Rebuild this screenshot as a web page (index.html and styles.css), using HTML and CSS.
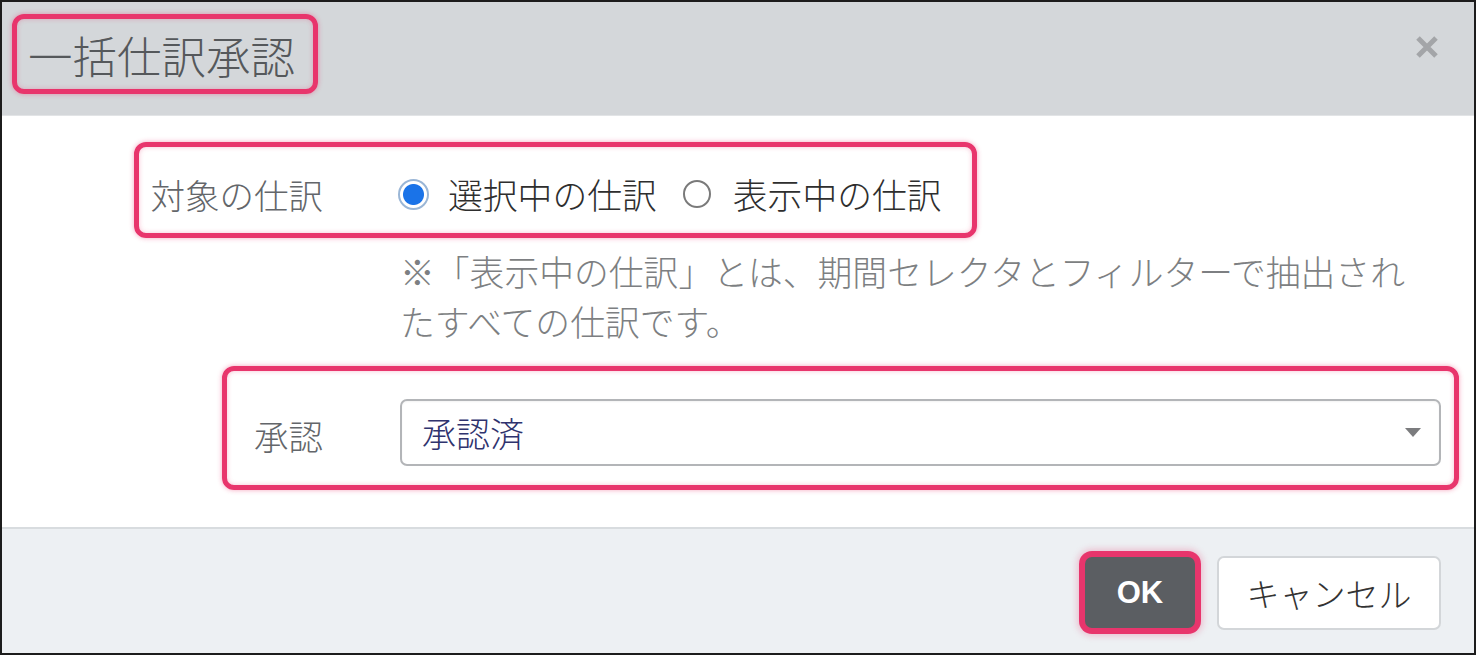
FILE: index.html
```html
<!DOCTYPE html>
<html lang="ja">
<head>
<meta charset="utf-8">
<title>一括仕訳承認</title>
<link rel="stylesheet" href="styles.css">
</head>
<body>
<div class="frame">
  <div class="modal-header">
    <h1 class="modal-title">一括仕訳承認</h1>
    <span class="close" aria-label="close">
      <svg width="26" height="26" viewBox="0 0 26 26"><path d="M4 4 L22 22 M22 4 L4 22" stroke="#a3a5a8" stroke-width="5" stroke-linecap="butt"/></svg>
    </span>
  </div>
  <div class="modal-body">
    <div class="form-row">
      <div class="label">対象の仕訳</div>
      <div class="radios">
        <label class="radio"><span class="dot checked"></span><span>選択中の仕訳</span></label>
        <label class="radio"><span class="dot"></span><span>表示中の仕訳</span></label>
      </div>
    </div>
    <div class="hint-row">
      <p class="hint">※「表示中の仕訳」とは、期間セレクタとフィルターで抽出されたすべての仕訳です。</p>
    </div>
    <div class="form-row select-row">
      <div class="label">承認</div>
      <div class="select">
        <span class="select-value">承認済</span>
        <span class="caret"></span>
      </div>
    </div>
  </div>
  <div class="modal-footer">
    <button class="btn btn-ok">OK</button>
    <button class="btn btn-cancel">キャンセル</button>
  </div>
  <div class="mark mark-title"></div>
  <div class="mark mark-target"></div>
  <div class="mark mark-approve"></div>
</div>
</body>
</html>
```

FILE: styles.css
```css
* { box-sizing: border-box; }
html, body { margin: 0; padding: 0; background: #fff; }
body {
  font-family: "Noto Sans CJK JP", "Noto Sans", sans-serif;
  font-weight: 300;
}
.frame {
  position: relative;
  width: 1476px;
  height: 655px;
  border: 2px solid #1c1c1c;
  display: flex;
  flex-direction: column;
  overflow: hidden;
  background: #fff;
}
.modal-header {
  height: 114px;
  flex: none;
  background: #d4d7da;
  border-bottom: 1px solid #e2e4e6;
  display: flex;
  align-items: center;
  justify-content: space-between;
  padding: 0 34px 0 26px;
}
.modal-title {
  margin: 0 0 6px 0;
  font-size: 44.5px;
  font-weight: 300;
  color: #55585b;
  line-height: 1;
}
.close {
  display: block;
  width: 26px;
  height: 26px;
  margin-bottom: 24px;
}
.close svg { display: block; }

.modal-body {
  flex: none;
  height: 411px;
  padding: 53px 33px 0 0;
}
.form-row {
  display: grid;
  grid-template-columns: 321px 1041px;
  column-gap: 77px;
  align-items: center;
  height: 50px;
}
.label {
  text-align: right;
  font-size: 34.5px;
  color: #63666a;
  line-height: 50px;
}
.radios {
  display: flex;
  align-items: center;
  font-size: 34.8px;
  color: #2e2e2e;
}
.radio {
  display: flex;
  align-items: center;
  line-height: 50px;
}
.radio + .radio { margin-left: 26px; }
.dot {
  width: 28px;
  height: 28px;
  border-radius: 50%;
  border: 2px solid #7a7a7a;
  background: #fff;
  margin-right: 22px;
  flex: none;
}
.dot.checked {
  width: 31px;
  height: 31px;
  margin-left: -2px;
  margin-right: 19px;
  border: 2px solid #9ab6d6;
  background: radial-gradient(circle, #1a73e8 0 10px, #fff 11px);
}
.hint-row {
  margin-top: 27px;
  padding-left: 398px;
}
.hint {
  margin: 0;
  width: 1025px;
  font-size: 34.8px;
  line-height: 50px;
  color: #7d7f82;
}
.select-row {
  margin-top: 50px;
  height: 67px;
}
.select-row .label { line-height: 67px; padding-top: 6px; }
.select {
  height: 67px;
  border: 2px solid #b3b5b8;
  border-radius: 7px;
  background: #fff;
  display: flex;
  align-items: center;
  justify-content: space-between;
  padding: 0 18px 0 20px;
  box-shadow: inset 0 1px 2px rgba(0,0,0,0.05);
}
.select-value {
  font-size: 34px;
  color: #2f336e;
  line-height: 1;
}
.caret {
  width: 0;
  height: 0;
  border-left: 8px solid transparent;
  border-right: 8px solid transparent;
  border-top: 9px solid #7b7c7e;
}

.modal-footer {
  flex: 1;
  background: #edf0f3;
  border-top: 2px solid #d8dcdf;
  display: flex;
  justify-content: flex-end;
  align-items: flex-start;
  padding: 27px 33px 0 0;
}
.btn {
  height: 74px;
  font-family: inherit;
  border-radius: 7px;
  margin: 0;
  cursor: pointer;
}
.btn-ok {
  width: 110px;
  margin-right: 22px;
  background: #5b5e62;
  color: #fff;
  border: none;
  font-family: "Liberation Sans", "Noto Sans", sans-serif;
  font-weight: 700;
  font-size: 31px;
  box-shadow: 0 0 0 6px #e8356c, 0 0 6px 8px rgba(232, 53, 108, 0.25);
  margin-top: 1px;
  height: 71px;
}
.btn-cancel {
  width: 224px;
  background: #fff;
  color: #333;
  border: 2px solid #d3d6d9;
  font-size: 33px;
  font-weight: 300;
  padding: 0;
}

.mark {
  position: absolute;
  border: 5px solid #e8356c;
  border-radius: 12px;
  box-shadow: 0 0 5px rgba(232, 53, 108, 0.45), inset 0 0 5px rgba(232, 53, 108, 0.3);
  pointer-events: none;
}
.mark-title { left: 10px; top: 12px; width: 306px; height: 80px; }
.mark-target { left: 132px; top: 140px; width: 843px; height: 96px; }
.mark-approve { left: 220px; top: 364px; width: 1237px; height: 124px; }
```
